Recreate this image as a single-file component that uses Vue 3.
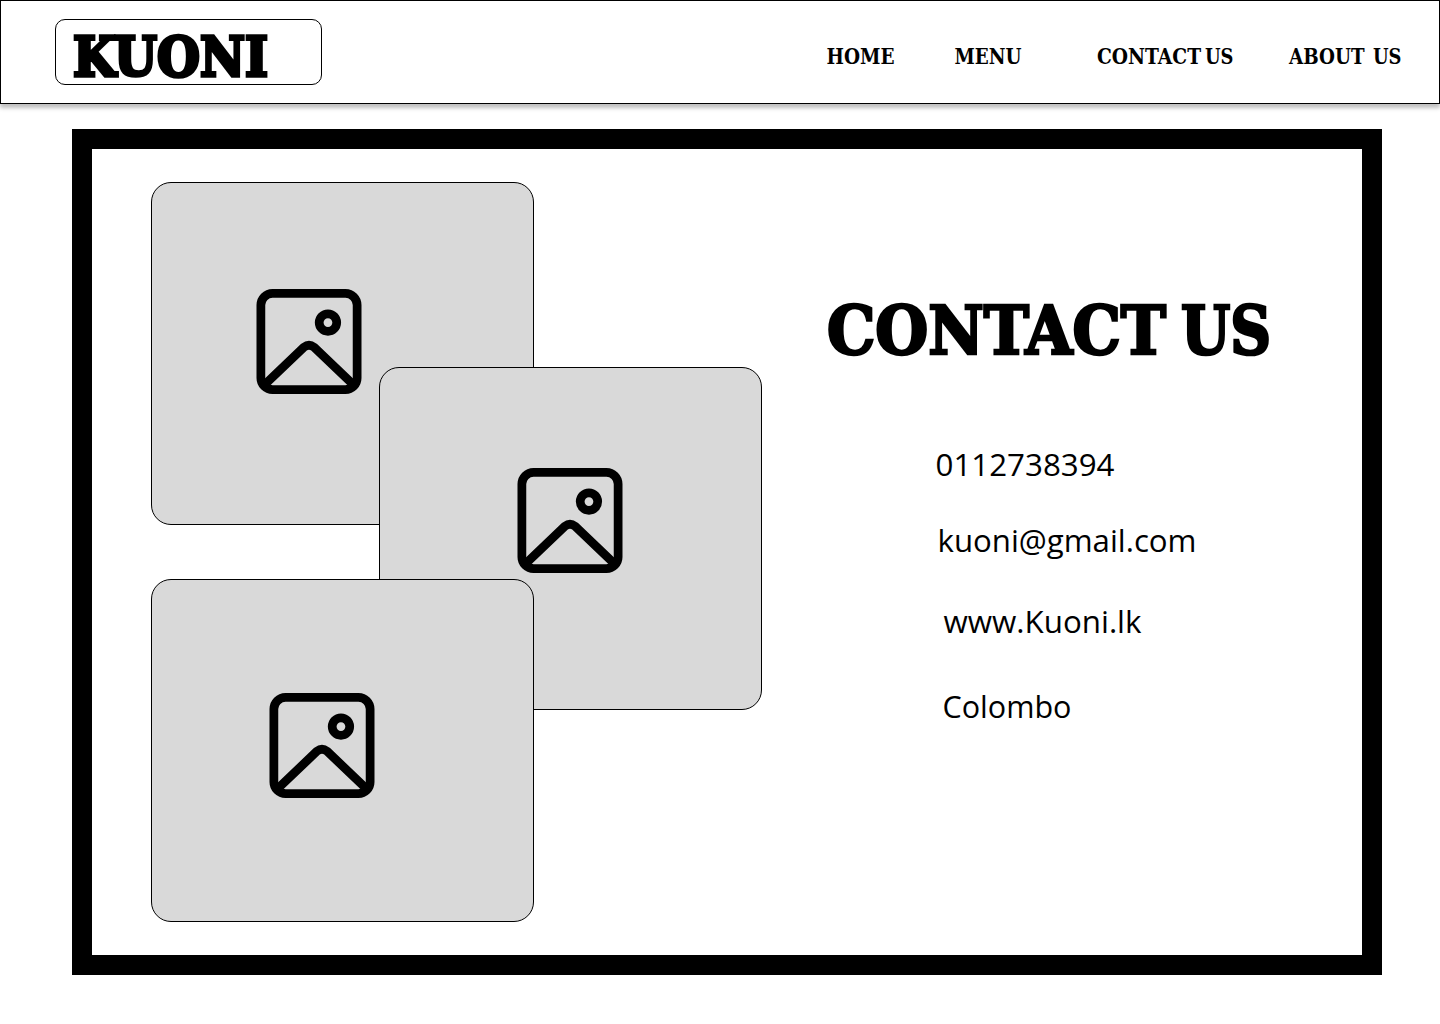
<script setup>
const nav = [
  { w: 68, gap: 0, words: [{ t: 'HOME', x: -0.5, l: 68 }] },
  { w: 67, gap: 60, words: [{ t: 'MENU', x: -0.5, l: 67 }] },
  { w: 137, gap: 75, words: [{ t: 'CONTACT', x: 0, l: 104 }, { t: 'US', x: 108, l: 28.5 }] },
  { w: 113, gap: 55, words: [{ t: 'ABOUT', x: 0, l: 75.5 }, { t: 'US', x: 84, l: 28.5 }] },
]
const cards = ['first', 'second', 'third']
const details = [
  { t: '0112738394', l: 179, cls: 'phone' },
  { t: 'kuoni@gmail.com', l: 259, cls: 'mail' },
  { t: 'www.Kuoni.lk', l: 198, cls: 'site' },
  { t: 'Colombo', l: 129, cls: 'city' },
]
</script>

<template>
  <div class="page">
    <header class="bar">
      <div class="logo">
        <svg width="198" height="64">
          <text x="1" y="56" textLength="195" lengthAdjust="spacingAndGlyphs">KUONI</text>
        </svg>
      </div>
      <nav class="nav">
        <a v-for="(n, i) in nav" :key="i" :style="{ marginLeft: n.gap + 'px' }">
          <svg :width="n.w" height="30">
            <text v-for="w in n.words" :key="w.t" :x="w.x" y="23" :textLength="w.l" lengthAdjust="spacingAndGlyphs">{{ w.t }}</text>
          </svg>
        </a>
      </nav>
    </header>

    <main class="frame">
      <section class="collage">
        <div v-for="c in cards" :key="c" class="card" :class="c">
          <svg class="icon" viewBox="0.086 0 18 18" fill="none" stroke="#000" stroke-width="1.5">
            <rect x=".75" y=".75" width="16.5" height="16.5" rx="2" />
            <circle cx="12.25" cy="5.75" r="1.5" />
            <path d="M1.5 16.3 8.15 9.97Q9 9.3 9.85 9.97L16.5 16.3" />
          </svg>
        </div>
      </section>
      <section class="info">
        <h1>
          <svg width="444" height="70">
            <text x="0" y="59.5" textLength="339" lengthAdjust="spacingAndGlyphs">CONTACT</text>
            <text x="354" y="59.5" textLength="90" lengthAdjust="spacingAndGlyphs">US</text>
          </svg>
        </h1>
        <p v-for="d in details" :key="d.t" :class="d.cls">
          <svg :width="d.l" height="40">
            <text x="0.5" y="30" :textLength="d.l" lengthAdjust="spacingAndGlyphs">{{ d.t }}</text>
          </svg>
        </p>
      </section>
    </main>
  </div>
</template>

<style>
body {
  margin: 0;
  background: #fff;
}
</style>

<style scoped>
.page {
  width: 1440px;
  height: 1024px;
  overflow: hidden;
  background: #fff;
  color: #000;
}
svg {
  display: block;
  overflow: visible;
}
.bar {
  box-sizing: border-box;
  height: 104px;
  border: 1px solid #000;
  box-shadow: 0 4px 4px rgba(0, 0, 0, 0.25);
  display: flex;
  justify-content: space-between;
  padding: 18px 37px 0 54px;
}
.logo {
  box-sizing: border-box;
  width: 267px;
  height: 66px;
  border: 1px solid #000;
  border-radius: 10px;
  padding-left: 16px;
}
.logo text {
  font: bold 54px "DejaVu Serif", serif;
  stroke: #000;
  stroke-width: 3.6px;
}
.nav {
  display: flex;
  padding-top: 22px;
}
.nav text {
  font: bold 21.5px "DejaVu Serif Condensed", "DejaVu Serif", serif;
}
.frame {
  box-sizing: border-box;
  width: 1310px;
  height: 846px;
  margin: 25px 0 0 72px;
  border: 20px solid #000;
  display: flex;
}
.collage {
  position: relative;
  width: 611px;
  height: 740px;
  margin: 33px 0 0 59px;
}
.card {
  position: absolute;
  box-sizing: border-box;
  width: 383px;
  height: 343px;
  border: 1px solid #000;
  border-radius: 20px;
  background: #d9d9d9;
}
.icon {
  width: 105px;
  height: 105px;
}
.first {
  left: 0;
  top: 0;
  padding: 106px 0 0 105px;
}
.second {
  left: 228px;
  top: 185px;
  padding: 100px 0 0 138px;
}
.third {
  left: 0;
  top: 397px;
  padding: 113px 0 0 118px;
}
.info {
  padding: 145px 0 0 65px;
}
h1,
p {
  margin: 0;
}
h1 text {
  font: bold 67px "DejaVu Serif Condensed", "DejaVu Serif", serif;
  stroke: #000;
  stroke-width: 2.6px;
}
p text {
  font: 30.5px "Open Sans", "Noto Sans", sans-serif;
}
.phone {
  margin: 82px 0 0 108px;
}
.mail {
  margin: 36px 0 0 110px;
}
.site {
  margin: 41px 0 0 116px;
}
.city {
  margin: 45px 0 0 115px;
}
</style>
